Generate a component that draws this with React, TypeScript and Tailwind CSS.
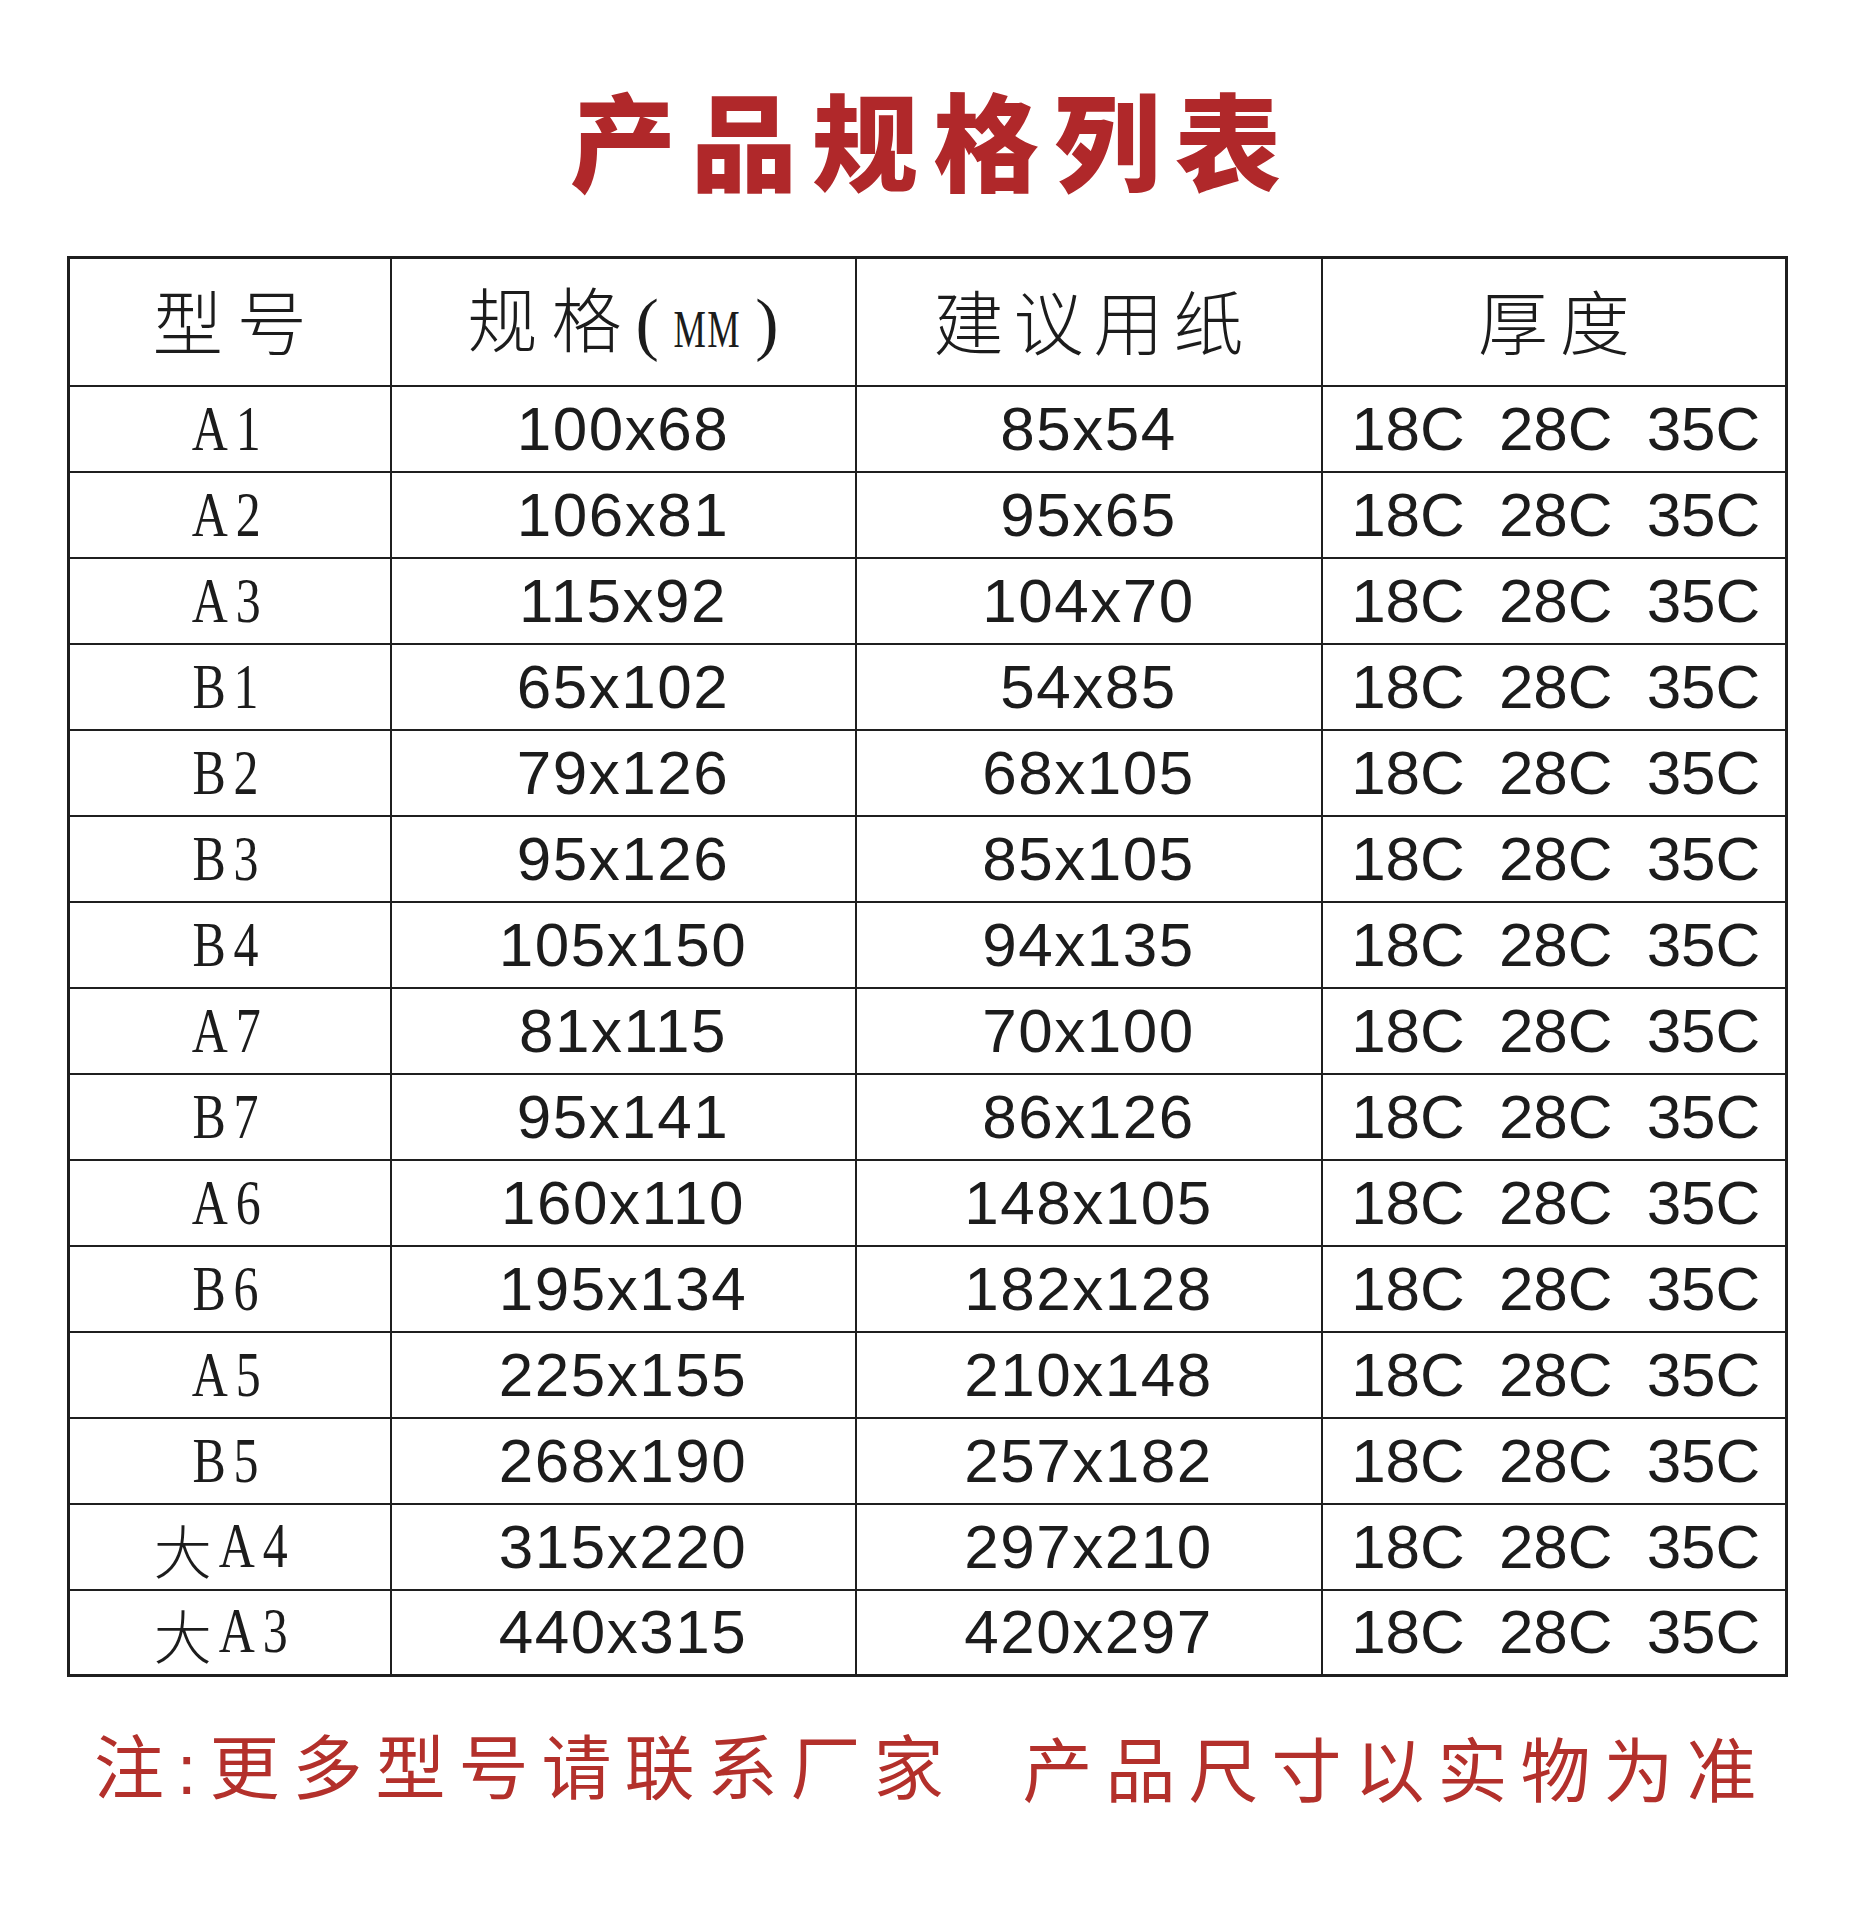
import React from "react";

const rows: [string, string, string][] = [
  ["A1", "100x68", "85x54"],
  ["A2", "106x81", "95x65"],
  ["A3", "115x92", "104x70"],
  ["B1", "65x102", "54x85"],
  ["B2", "79x126", "68x105"],
  ["B3", "95x126", "85x105"],
  ["B4", "105x150", "94x135"],
  ["A7", "81x115", "70x100"],
  ["B7", "95x141", "86x126"],
  ["A6", "160x110", "148x105"],
  ["B6", "195x134", "182x128"],
  ["A5", "225x155", "210x148"],
  ["B5", "268x190", "257x182"],
  ["大A4", "315x220", "297x210"],
  ["大A3", "440x315", "420x297"],
];

const cjk = "font-['Noto_Sans_CJK_SC',sans-serif]";
const sans = "font-['Liberation_Sans','Noto_Sans_CJK_SC',sans-serif]";

function Model({ name }: { name: string }) {
  const big = name.startsWith("大");
  const code = big ? name.slice(1) : name;
  return (
    <span className="inline-flex items-end justify-center">
      {big && (
        <span className={`${cjk} font-light text-[58px] leading-none mr-[-4px]`}>大</span>
      )}
      <span className="inline-block scale-x-[0.78] font-['Liberation_Serif',serif] text-[64px] leading-none tracking-[10px]">
        {code}
      </span>
    </span>
  );
}

export default function App() {
  return (
    <div className="w-[1851px] min-h-[1920px] bg-white text-[#1c1c1c]">
      <h1
        className={`${cjk} pt-[84px] text-center text-[106px] font-black leading-none tracking-[15px] text-[#b0282a] pl-[15px]`}
      >
        产品规格列表
      </h1>

      <div className="mx-[67px] mt-[66px]">
        <table className="w-full table-fixed border-collapse border-[3px] border-[#1f1f1f]">
          <colgroup>
            <col className="w-[322px]" />
            <col className="w-[465px]" />
            <col className="w-[466px]" />
            <col className="w-[465px]" />
          </colgroup>
          <thead>
            <tr className="h-[128px]">
              <th className={`${cjk} border-[2.5px] border-[#1f1f1f] text-[70px] font-light tracking-[14px] pl-[14px] pb-[4px]`}>
                型号
              </th>
              <th className={`${cjk} border-[2.5px] border-[#1f1f1f] text-[70px] font-light tracking-[14px] pb-[4px]`}>
                规格
                <span className="font-['Liberation_Serif',serif] font-normal tracking-normal">
                  (<span className="inline-block scale-x-[0.7] text-[52px] tracking-[2px]">MM</span>)
                </span>
              </th>
              <th className={`${cjk} border-[2.5px] border-[#1f1f1f] text-[70px] font-light tracking-[10px] pl-[10px] pb-[4px]`}>
                建议用纸
              </th>
              <th className={`${cjk} border-[2.5px] border-[#1f1f1f] text-[70px] font-light tracking-[12px] pl-[12px] pb-[4px]`}>
                厚度
              </th>
            </tr>
          </thead>
          <tbody>
            {rows.map(([model, size, paper]) => (
              <tr key={model} className="h-[86px]">
                <td className="border-[2.5px] border-[#1f1f1f] text-center p-0">
                  <Model name={model} />
                </td>
                <td className={`${sans} border-[2.5px] border-[#1f1f1f] text-center text-[62px] leading-none tracking-[1.5px] p-0`}>
                  {size}
                </td>
                <td className={`${sans} border-[2.5px] border-[#1f1f1f] text-center text-[62px] leading-none tracking-[1.5px] p-0`}>
                  {paper}
                </td>
                <td className={`${sans} border-[2.5px] border-[#1f1f1f] text-[62px] leading-none p-0`}>
                  <div className="flex items-center justify-center gap-[34px] pl-[4px]">
                    <span>18C</span>
                    <span>28C</span>
                    <span>35C</span>
                  </div>
                </td>
              </tr>
            ))}
          </tbody>
        </table>
      </div>

      <div className={`${cjk} mt-[52px] flex items-center pl-[94px] text-[70px] leading-none text-[#b3302b]`}>
        <span className="tracking-[13px]">
          注<span className="font-['Liberation_Sans',sans-serif]">:</span>更多型号请联系厂家
        </span>
        <span className="ml-[66px] tracking-[13px]">产品尺寸以实物为准</span>
      </div>
    </div>
  );
}
